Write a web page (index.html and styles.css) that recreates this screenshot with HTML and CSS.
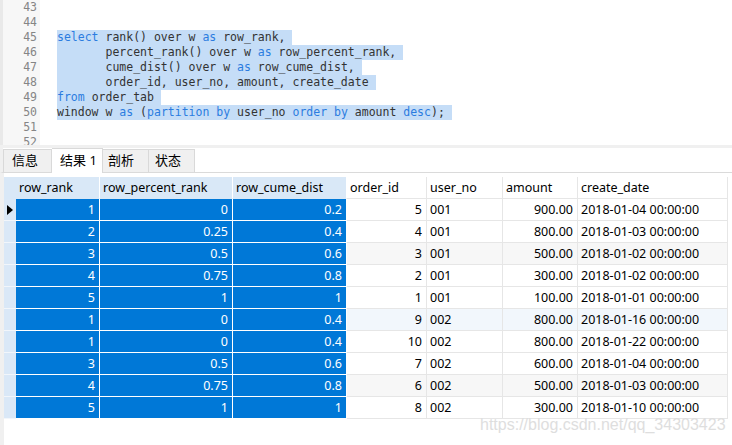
FILE: index.html
```html
<!DOCTYPE html>
<html>
<head>
<meta charset="utf-8">
<link rel="stylesheet" href="styles.css">
</head>
<body>
<div class="editor">
  <div class="gutter">
    <div class="ln">43</div><div class="ln">44</div><div class="ln">45</div><div class="ln">46</div><div class="ln">47</div><div class="ln">48</div><div class="ln">49</div><div class="ln">50</div><div class="ln">51</div><div class="ln">52</div>
  </div>
  <div class="code">
    <div class="line"></div>
    <div class="line"></div>
    <div class="line"><span class="sel"><span class="k">select</span> rank() over w <span class="k">as</span> row_rank, </span></div>
    <div class="line"><span class="sel">       percent_rank() over w <span class="k">as</span> row_percent_rank, </span></div>
    <div class="line"><span class="sel">       cume_dist() over w <span class="k">as</span> row_cume_dist, </span></div>
    <div class="line"><span class="sel">       order_id, user_no, amount, create_date </span></div>
    <div class="line"><span class="sel"><span class="k">from</span> order_tab </span></div>
    <div class="line"><span class="sel">window w <span class="k">as</span> (<span class="k">partition</span> <span class="k">by</span> user_no <span class="k">order</span> <span class="k">by</span> amount <span class="k">desc</span>); </span></div>
    <div class="line"></div>
    <div class="line"></div>
  </div>
</div>
<div class="splitter"></div>
<div class="tabs">
  <div class="tab t1">信息</div>
  <div class="tab t2 active">结果 1</div>
  <div class="tab t3">剖析</div>
  <div class="tab t4">状态</div>
</div>
<div class="result">
  <table class="grid">
    <colgroup>
      <col class="c-ind"><col class="c-rank"><col class="c-prank"><col class="c-cume"><col class="c-oid"><col class="c-user"><col class="c-amt"><col class="c-date">
    </colgroup>
    <thead>
      <tr>
        <th class="ind"></th>
        <th class="hs">row_rank</th>
        <th class="hs">row_percent_rank</th>
        <th class="hs">row_cume_dist</th>
        <th>order_id</th>
        <th>user_no</th>
        <th>amount</th>
        <th>create_date</th>
      </tr>
    </thead>
    <tbody>
      <tr><td class="ind"><svg class="arrow" width="6" height="10" viewBox="0 0 6 10"><path d="M0 0 L6 5 L0 10 Z" fill="#000"/></svg></td><td class="s">1</td><td class="s">0</td><td class="s">0.2</td><td class="r">5</td><td>001</td><td class="r">900.00</td><td>2018-01-04 00:00:00</td></tr>
      <tr><td class="ind"></td><td class="s">2</td><td class="s">0.25</td><td class="s">0.4</td><td class="r">4</td><td>001</td><td class="r">800.00</td><td>2018-01-03 00:00:00</td></tr>
      <tr class="g"><td class="ind"></td><td class="s">3</td><td class="s">0.5</td><td class="s">0.6</td><td class="r">3</td><td>001</td><td class="r">500.00</td><td>2018-01-02 00:00:00</td></tr>
      <tr><td class="ind"></td><td class="s">4</td><td class="s">0.75</td><td class="s">0.8</td><td class="r">2</td><td>001</td><td class="r">300.00</td><td>2018-01-02 00:00:00</td></tr>
      <tr><td class="ind"></td><td class="s">5</td><td class="s">1</td><td class="s">1</td><td class="r">1</td><td>001</td><td class="r">100.00</td><td>2018-01-01 00:00:00</td></tr>
      <tr class="b"><td class="ind"></td><td class="s">1</td><td class="s">0</td><td class="s">0.4</td><td class="r">9</td><td>002</td><td class="r">800.00</td><td>2018-01-16 00:00:00</td></tr>
      <tr><td class="ind"></td><td class="s">1</td><td class="s">0</td><td class="s">0.4</td><td class="r">10</td><td>002</td><td class="r">800.00</td><td>2018-01-22 00:00:00</td></tr>
      <tr><td class="ind"></td><td class="s">3</td><td class="s">0.5</td><td class="s">0.6</td><td class="r">7</td><td>002</td><td class="r">600.00</td><td>2018-01-04 00:00:00</td></tr>
      <tr class="g"><td class="ind"></td><td class="s">4</td><td class="s">0.75</td><td class="s">0.8</td><td class="r">6</td><td>002</td><td class="r">500.00</td><td>2018-01-03 00:00:00</td></tr>
      <tr><td class="ind"></td><td class="s">5</td><td class="s">1</td><td class="s">1</td><td class="r">8</td><td>002</td><td class="r">300.00</td><td>2018-01-10 00:00:00</td></tr>
    </tbody>
  </table>
</div>
<div class="watermark">https://blog.csdn.net/qq_34303423</div>
</body>
</html>
```
FILE: styles.css
```css
html, body {
  margin: 0;
  padding: 0;
}
body {
  width: 732px;
  height: 445px;
  overflow: hidden;
  background: #fff;
  position: relative;
  font-family: "Noto Sans", "Noto Sans CJK SC", sans-serif;
  color: #000;
}

/* editor */
.editor {
  height: 145px;
  display: flex;
  overflow: hidden;
  font-family: "DejaVu Sans Mono", monospace;
  font-size: 11.5px;
  line-height: 15px;
}
.gutter {
  width: 40px;
  box-sizing: border-box;
  background: #f7f7f7;
  border-left: 3px solid #e9e9e9;
  text-align: right;
  padding-right: 3px;
  color: #858585;
}
.ln {
  height: 15px;
}
.code {
  flex: 1;
  padding-left: 17px;
  color: #333;
}
.line {
  height: 15px;
  white-space: pre;
}
.sel {
  display: inline-block;
  height: 15px;
  background: #c5ddf7;
  vertical-align: top;
}
.k {
  color: #2b7ce0;
}

.splitter {
  height: 3px;
  background: #f0f0f0;
}

/* tabs */
.tabs {
  height: 24px;
  display: flex;
  align-items: flex-end;
  border-left: 3px solid #f0f0f0;
  border-bottom: 1px solid #dadada;
}
.tab {
  height: 23px;
  box-sizing: border-box;
  background: #f0f0f0;
  border: 1px solid #d9d9d9;
  border-bottom: none;
  font-size: 13px;
  line-height: 21px;
  padding-left: 8px;
  color: #000;
}
.tab + .tab {
  border-left: none;
}
.t1 { width: 49px; }
.t2 { width: 51px; }
.t3 { width: 46px; padding-left: 5px; }
.t4 { width: 46px; padding-left: 6px; }
.tab.active {
  background: #fff;
  height: 25px;
  margin-bottom: -1px;
  line-height: 22px;
}

/* result grid */
.result {
  border-left: 4px solid #f0f0f0;
  padding-top: 4px;
  height: 272px;
  box-sizing: border-box;
}
.grid {
  border-collapse: separate;
  border-spacing: 0;
  table-layout: fixed;
  width: 724px;
  font-size: 12.5px;
}
.c-ind { width: 12px; }
.c-rank { width: 84px; }
.c-prank { width: 133px; }
.c-cume { width: 114px; }
.c-oid { width: 80px; }
.c-user { width: 76px; }
.c-amt { width: 75px; }
.c-date { width: 150px; }

.grid th,
.grid td {
  height: 21px;
  padding: 0 4px 0 3px;
  border-right: 1px solid #e6e6e6;
  border-bottom: 1px solid #e6e6e6;
  white-space: nowrap;
  overflow: hidden;
  text-align: left;
  font-weight: normal;
  line-height: 21px;
}
.grid th {
  background: #fff;
}
.grid th.hs {
  background: #d9e8f7;
  border-right-color: #fff;
  border-bottom-color: #d9e8f7;
}
.grid th.ind {
  background: #d9e8f7;
  border-right: none;
  border-bottom-color: #d9e8f7;
  padding: 0;
}
.grid tbody tr td.ind {
  background: #dae8f7;
  border-right: none;
  border-bottom-color: #f2f6fb;
  padding: 0;
}
.arrow {
  display: block;
  margin-left: 3px;
}
.grid tr.g td { background: #f7f7f7; }
.grid tr.b td { background: #f2f7fc; }
.grid td.r {
  text-align: right;
}
.grid tbody tr td.s {
  background: #0078d7;
  color: #fff;
  text-align: right;
  border-right-color: #fff;
  border-bottom-color: #fff;
}

.watermark {
  position: absolute;
  left: 480px;
  top: 416px;
  font-family: "Liberation Sans", Arial, sans-serif;
  font-size: 16px;
  color: #dedede;
  white-space: nowrap;
}
```
